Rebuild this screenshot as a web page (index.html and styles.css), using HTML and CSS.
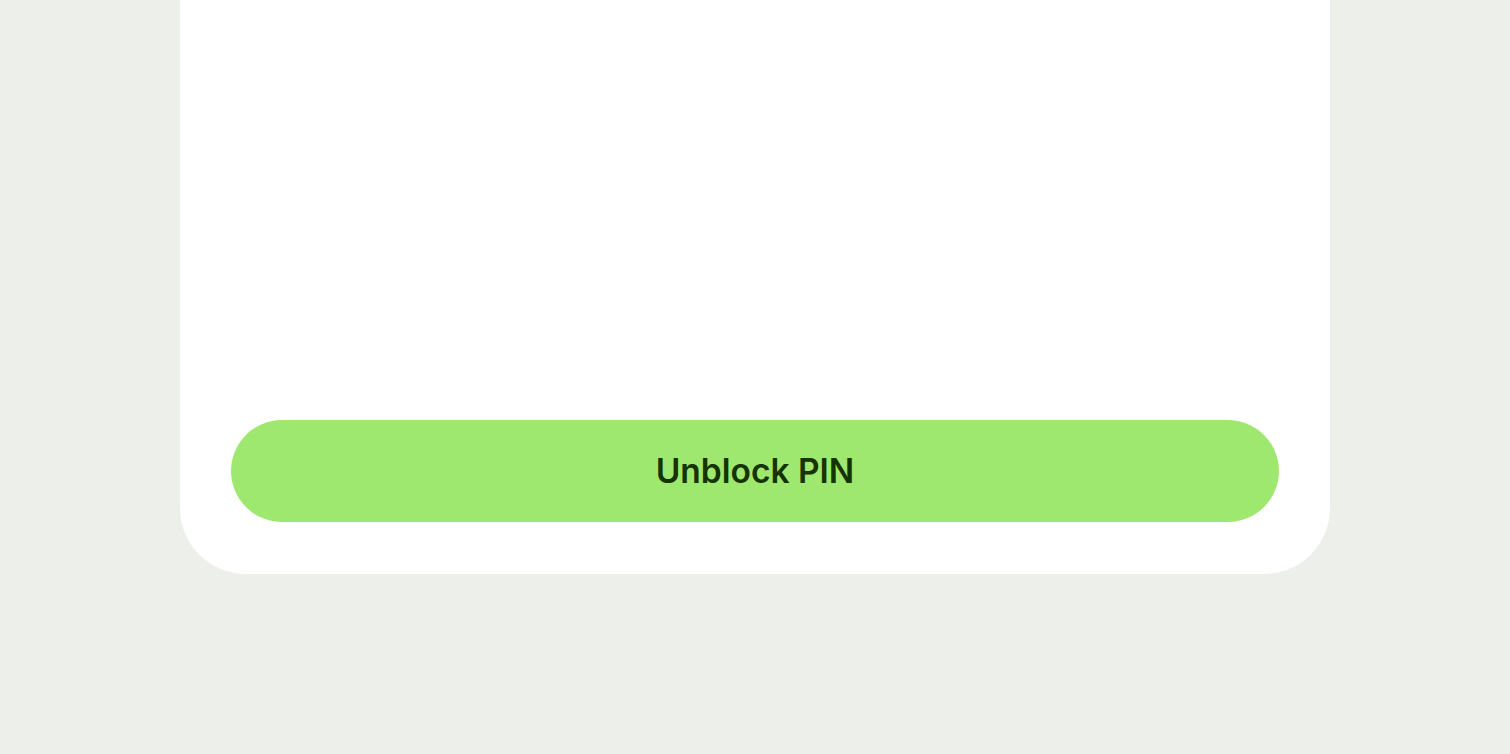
FILE: index.html
```html
<!DOCTYPE html>
<html lang="en">
<head>
<meta charset="utf-8">
<title>Unblock PIN</title>
<link rel="stylesheet" href="styles.css">
</head>
<body>
<div class="page">
  <div class="card">
    <button class="primary" type="button">Unblock PIN</button>
  </div>
</div>
</body>
</html>
```
FILE: styles.css
```css
html, body {
  margin: 0;
  padding: 0;
  height: 100%;
}
body {
  background: #edefea;
  font-family: Inter, "Noto Sans", sans-serif;
  overflow: hidden;
}
.page {
  display: flex;
  justify-content: center;
  height: 754px;
  box-sizing: border-box;
  padding-bottom: 180px;
}
.card {
  width: 1150px;
  height: 574px;
  background: #ffffff;
  border-radius: 0 0 66px 66px;
  box-sizing: border-box;
  padding: 0 51px 52px;
  display: flex;
  flex-direction: column;
  justify-content: flex-end;
}
.primary {
  height: 102px;
  width: 100%;
  border: none;
  border-radius: 51px;
  background: #9fe870;
  color: #163300;
  font-family: Inter, "Noto Sans", sans-serif;
  font-weight: 600;
  font-size: 33.5px;
  letter-spacing: 0;
  padding: 0;
  cursor: pointer;
}
```
